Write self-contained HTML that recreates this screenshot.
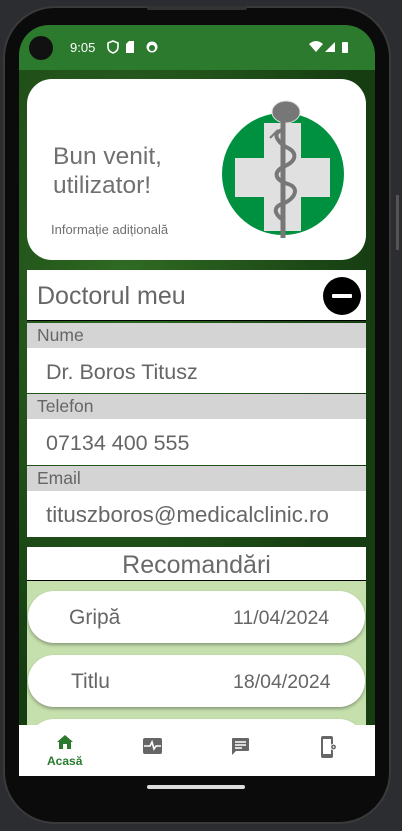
<!DOCTYPE html>
<html><head><meta charset="utf-8"><style>
*{margin:0;padding:0;box-sizing:border-box}
body{width:402px;height:831px;background:#2b2d30;position:relative;overflow:hidden;font-family:"Liberation Sans",sans-serif;color:#666}
.phone{position:absolute;left:3px;top:6px;width:388px;height:818px;border-radius:52px;background:#0b0b0b;border:2px solid #3a3a3a}
.screen{position:absolute;left:19px;top:25px;width:356px;height:751px;border-radius:30px 30px 0 0;overflow:hidden;background:#0a0a0a}
.status{position:absolute;left:0;top:0;width:356px;height:45px;background:#2b7a2e;color:#fff;font-size:13px}
.bg{position:absolute;left:0;top:45px;width:356px;height:655px;background:radial-gradient(ellipse at 30% 30%,#2f6a22,#163d12 70%),#1d4a17}
.abs{position:absolute}
.card{left:8px;top:54px;width:339px;height:181px;background:#fff;border-radius:25px}
.white{background:#fff}
.lab{background:#d4d4d4;font-size:17.5px;color:#666;padding-left:10px;line-height:25px}
.val{background:#fff;font-size:21.5px;color:#666;padding-left:19px}
.pill{left:9px;width:337px;height:52px;background:#fff;border-radius:26px;box-shadow:0 2px 3px rgba(0,0,0,.3);font-size:21px}
.nav{left:0;top:700px;width:356px;height:51px;background:#fff}
</style></head><body>
<div class="phone"></div>
<div class="abs" style="left:147px;top:6px;width:100px;height:4px;background:#333;border-radius:2px"></div>
<div class="abs" style="left:396px;top:195px;width:3px;height:55px;background:#555"></div>
<div class="screen">
 <div class="status">
  <div class="abs" style="left:10px;top:11px;width:24px;height:24px;border-radius:50%;background:#111"></div>
  <div class="abs" style="left:51px;top:15px">9:05</div>
  <svg class="abs" style="left:88px;top:15px" width="60" height="14" viewBox="0 0 60 14"><path d="M6 1l5 2v4c0 3-2 5-5 6-3-1-5-3-5-6V3z" fill="none" stroke="#fff" stroke-width="1.6"/><path d="M22 1h5v12h-8V4z" fill="#fff"/><circle cx="45" cy="7" r="5.5" fill="#fff"/><circle cx="45" cy="8" r="3" fill="#2b7a2e"/></svg>
  <svg class="abs" style="left:290px;top:15px" width="45" height="14" viewBox="0 0 45 14"><path d="M0 4q7-6 14 0l-7 8z" fill="#fff"/><path d="M16 12L26 2v10z" fill="#fff"/><rect x="33" y="2" width="6" height="11" rx="1" fill="#fff"/></svg>
 </div>
 <div class="bg"></div>
 <div class="abs card">
  <div class="abs" style="left:26px;top:63px;font-size:24.5px;line-height:29px;color:#707070">Bun venit,<br>utilizator!</div>
  <div class="abs" style="left:24px;top:143px;font-size:13px;color:#707070">Informație adițională</div>
  <svg class="abs" style="left:195px;top:21px" width="126" height="138" viewBox="0 0 126 138"><circle cx="61" cy="74" r="61" fill="#009140"/><path d="M42 23h37v35h29v39h-29v34h-37v-34h-29v-39h29z" fill="#e0e0e0"/><ellipse cx="64" cy="12" rx="14" ry="11" fill="#777" stroke="#ddd"/><path d="M61 20v118" stroke="#777" stroke-width="5"/><path d="M60 30c-12 4-2 14 6 18s10 12-3 18-10 14 3 18 6 16-6 20-4 14 2 16" stroke="#777" stroke-width="4" fill="none"/><path d="M48 38l8-8" stroke="#777" stroke-width="2"/></svg>
 </div>
 <div class="abs white" style="left:8px;top:245px;width:339px;height:51px;border-bottom:1.5px solid #000">
  <div class="abs" style="left:10px;top:12px;font-size:25px;color:#666">Doctorul meu</div>
  <div class="abs" style="left:296px;top:7px;width:38px;height:38px;border-radius:50%;background:#000"><div class="abs" style="left:9px;top:17px;width:20px;height:4px;background:#fff;border-radius:1px"></div></div>
 </div>
 <div class="abs lab" style="left:8px;top:298px;width:339px;height:25px">Nume</div>
 <div class="abs val" style="left:8px;top:323px;width:339px;height:45px;line-height:48px">Dr. Boros Titusz</div>
 <div class="abs lab" style="left:8px;top:369px;width:339px;height:25px">Telefon</div>
 <div class="abs val" style="left:8px;top:394px;width:339px;height:46px;line-height:48px">07134 400 555</div>
 <div class="abs lab" style="left:8px;top:441px;width:339px;height:25px">Email</div>
 <div class="abs val" style="left:8px;top:466px;width:339px;height:46px;line-height:48px;font-size:22.3px">tituszboros@medicalclinic.ro</div>
 <div class="abs white" style="left:8px;top:522px;width:339px;height:34px;border-bottom:1.5px solid #000;text-align:center;font-size:25px;line-height:36px;color:#6a6a6a">Recomandări</div>
 <div class="abs" style="left:8px;top:556px;width:339px;height:144px;background:#c5dfad"></div>
 <div class="abs pill" style="top:566px"><span class="abs" style="left:41px;top:15px">Gripă</span><span class="abs" style="left:205px;top:16px;font-size:19.5px">11/04/2024</span></div>
 <div class="abs pill" style="top:630px"><span class="abs" style="left:43px;top:15px">Titlu</span><span class="abs" style="left:205px;top:16px;font-size:19.5px">18/04/2024</span></div>
 <div class="abs pill" style="top:694px"></div>
 <div class="abs nav">
  <svg class="abs" style="left:37px;top:9px" width="18" height="16" viewBox="0 0 18 16"><path d="M9 1L1 8h2v7h4v-5h4v5h4V8h2z" fill="#2b7a2e"/></svg>
  <div class="abs" style="left:28px;top:29px;font-size:12px;font-weight:bold;color:#2b7a2e">Acasă</div>
  <svg class="abs" style="left:124px;top:13px" width="19" height="16" viewBox="0 0 19 16"><rect width="19" height="16" rx="2" fill="#666"/><path d="M1 8h6l2-4 2 7 2-3h5" stroke="#fff" stroke-width="1.6" fill="none"/></svg>
  <svg class="abs" style="left:212px;top:12px" width="19" height="19" viewBox="0 0 19 19"><path d="M2 1h15a1 1 0 0 1 1 1v11a1 1 0 0 1-1 1H5l-4 4V2a1 1 0 0 1 1-1z" fill="#666"/><path d="M4 5h11M4 8h11M4 11h7" stroke="#fff" stroke-width="1.4"/></svg>
  <svg class="abs" style="left:302px;top:11px" width="17" height="22" viewBox="0 0 17 22"><rect x="0" y="0" width="12" height="22" rx="2" fill="#666"/><rect x="2" y="3" width="8" height="15" fill="#fff"/><circle cx="12.5" cy="11" r="3.3" fill="#fff"/><circle cx="12.5" cy="11" r="2.4" fill="#666"/><circle cx="12.5" cy="11" r="0.9" fill="#fff"/></svg>
 </div>
</div>
<div class="abs" style="left:147px;top:785px;width:98px;height:4px;border-radius:2px;background:#ddd"></div>
</body></html>
